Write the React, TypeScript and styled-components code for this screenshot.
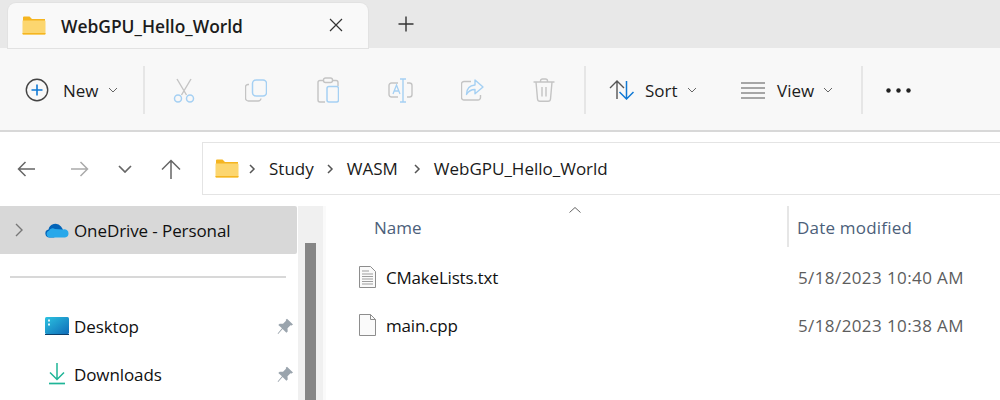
import React from 'react';
import styled, { createGlobalStyle } from 'styled-components';

const Global = createGlobalStyle`
  html, body { margin: 0; padding: 0; background: #fff; overflow: hidden; }
  * { box-sizing: border-box; }
  #root { width: 1000px; height: 400px; overflow: hidden; font-family: "Open Sans", "Noto Sans", sans-serif; color: #1a1a1a; }
`;

const TabStrip = styled.div`
  height: 48px; background: #e8e8e8; padding: 3px 0 0 8px; display: flex; align-items: stretch;
`;
const Tab = styled.div`
  width: 360px; background: #f9f9f9; border-radius: 8px 8px 0 0; display: flex; align-items: center; padding: 0 25px 0 14px;
  box-shadow: 0 0 0 1px #e2e2e2;
`;
const TabTitle = styled.span`
  margin-left: 15px; font-size: 17.4px; font-weight: 600; flex: 1; color: #1c1c1c;
`;
const CloseIcon = styled.svg`
  margin-bottom: 2px;
`;
const NewTab = styled.div`
  margin-left: 30px; display: flex; align-items: center; padding-bottom: 4px;
`;
const Toolbar = styled.div`
  height: 84px; background: #f8f8f8; border-bottom: 2px solid #d8d8d8; display: flex; align-items: center; padding: 2px 0 0 25px;
`;
const ToolButton = styled.div<{ $w: number; $pl?: number }>`
  width: ${p => p.$w}px; padding-left: ${p => p.$pl ?? 0}px; display: flex; align-items: center; font-size: 17px; letter-spacing: 0; color: #1c1c1c; flex: none;
`;
const ToolLabel = styled.span<{ $gap: number }>`
  margin-left: ${p => p.$gap}px;
`;
const Chevron = styled.span`
  margin-left: 9px; display: flex;
`;
const ToolDivider = styled.div`
  width: 2px; height: 48px; background: #e6e6e6; flex: none;
`;
const IconSlot = styled.div<{ $w: number }>`
  width: ${p => p.$w}px; display: flex; justify-content: center; flex: none;
`;
const Spacer = styled.div`
  width: 7px; flex: none;
`;
const AddressRow = styled.div`
  height: 74px; display: flex; align-items: flex-start; padding-top: 10px; background: #fff;
`;
const NavIcons = styled.div`
  width: 202px; height: 53px; flex: none; display: grid; grid-template-columns: 53px 53px 37px 55px; align-items: center; justify-items: center;
`;
const AddressBox = styled.div`
  flex: 1; height: 53px; border: 1px solid #e4e4e4; border-right: none; display: flex; align-items: center; padding-left: 12px; font-size: 17px; color: #1a1a1a; margin-right: -2px;
`;
const Crumb = styled.span`
  margin-left: 13px;
`;
const Sep = styled.span`
  margin-left: 12px; display: flex;
  &:nth-child(2) { margin-left: 9px; }
  &:nth-child(6) { margin-left: 15px; }
`;
const Body = styled.div`
  height: 194px; display: flex; background: #fff;
`;
const Sidebar = styled.div`
  width: 298px; flex: none;
`;
const SelectedRow = styled.div`
  height: 48px; background: #d8d8d8; display: flex; align-items: center; padding-left: 15px; margin-right: 1px; border-radius: 0 2px 2px 0; font-size: 17px; letter-spacing: -0.1px; color: #101010;
`;
const Expander = styled.svg`
  margin-right: 21px;
`;
const CloudIcon = styled.svg`
  margin-right: 5px;
`;
const SideDivider = styled.div`
  height: 2px; background: #d8d8d8; margin: 22px 12px 24px 10px;
`;
const SideRow = styled.div`
  height: 48px; display: flex; align-items: center; padding-left: 45px; font-size: 17px; letter-spacing: -0.1px; color: #101010;
`;
const SideIcon = styled.span`
  width: 24px; display: flex; justify-content: center; margin-right: 5px; flex: none;
`;
const Pin = styled.span`
  margin-left: auto; margin-right: 4px; display: flex;
`;
const ScrollTrack = styled.div`
  width: 28px; flex: none; background: linear-gradient(to right, #f0f0f0 0 25px, #fafafa 25px); padding: 37px 7px 0 7px;
`;
const ScrollThumb = styled.div`
  width: 11px; height: 157px; background: #868686;
`;
const Content = styled.div`
  flex: 1; padding-left: 33px; min-width: 0;
`;
const HeaderRow = styled.div`
  height: 41px; display: flex; position: relative; font-size: 17px; color: #4c607a;
`;
const SortCaret = styled.span`
  position: absolute; left: 210px; top: 0; display: flex;
`;
const NameHead = styled.div`
  width: 428px; padding-left: 15px; padding-top: 10px;
`;
const DateHead = styled.div`
  border-left: 2px solid #e6e6e6; padding-left: 8px; padding-top: 10px; white-space: nowrap; flex: 1; letter-spacing: 0.2px;
`;
const Rows = styled.div`
  padding-top: 6px;
`;
const FileRow = styled.div`
  height: 48px; display: flex; align-items: center; font-size: 17px; letter-spacing: -0.2px; color: #101010;
`;
const FileName = styled.div`
  width: 412px; display: flex; align-items: center; gap: 10px;
`;
const FileDate = styled.div`
  padding-left: 27px; color: #5d5d5d; white-space: nowrap; font-size: 17px; letter-spacing: 0.4px;
`;

const blue = '#a5d0f3';
const grey = '#c4c4c4';

const Folder = () => (
  <svg width="24" height="19" viewBox="0 0 24 19">
    <path d="M1 1.5A1 1 0 0 1 2 .5h5.5L10 3h13v3H1z" fill="#f5b520" />
    <path d="M.5 4.5h22.3a.7.7 0 0 1 .7.7v12.6a.7.7 0 0 1-.7.7H1.2a.7.7 0 0 1-.7-.7z" fill="#fcd66f" />
    <path d="M.5 17h23v.8a.7.7 0 0 1-.7.7H1.2a.7.7 0 0 1-.7-.7z" fill="#f5b520" />
  </svg>
);
const Down = () => (
  <svg width="10" height="6" viewBox="0 0 10 6"><path d="M1 1l4 4 4-4" fill="none" stroke="#666" strokeWidth="1" /></svg>
);
const Crumbsep = () => (
  <svg width="8" height="10" viewBox="0 0 8 10"><path d="M2 1l4 4-4 4" fill="none" stroke="#555" strokeWidth="1.5" /></svg>
);
const PinIcon = () => (
  <svg width="17" height="17" viewBox="0 0 17 17">
    <path d="M10 .8l6 5.6-1.4 1.2-1.1-.3-3 3 .2 3.2-1.3 1.2L5.6 11 1.2 16 .6 15.4 5 10.3 1.3 7l1.4-1.3 3.3.1 3-3-.2-1z" fill="#9aa4ad" />
  </svg>
);

export default function App() {
  return (
    <>
      <Global />
      <TabStrip>
        <Tab>
          <Folder />
          <TabTitle>WebGPU_Hello_World</TabTitle>
          <CloseIcon width="14" height="14" viewBox="0 0 14 14"><path d="M1 1l12 12M13 1L1 13" stroke="#333" strokeWidth="1.2" /></CloseIcon>
        </Tab>
        <NewTab>
          <svg width="16" height="16" viewBox="0 0 16 16"><path d="M8 .5v15M.5 8h15" stroke="#333" strokeWidth="1.4" /></svg>
        </NewTab>
      </TabStrip>
      <Toolbar>
        <ToolButton $w={118}>
          <svg width="24" height="24" viewBox="0 0 24 24">
            <circle cx="12" cy="12" r="10.7" fill="none" stroke="#444" strokeWidth="1.4" />
            <path d="M12 6.5v11M6.5 12h11" stroke="#0f78d4" strokeWidth="1.6" />
          </svg>
          <ToolLabel $gap={14}>New</ToolLabel>
          <Chevron><Down /></Chevron>
        </ToolButton>
        <ToolDivider />
        <IconSlot $w={78}>
          <svg width="22" height="25" viewBox="0 0 22 25">
            <path d="M4 1l9.5 16M18 1L8.500 17" fill="none" stroke={grey} strokeWidth="1.4" />
            <circle cx="5" cy="20.500" r="3.500" fill="none" stroke={blue} strokeWidth="1.5" />
            <circle cx="17" cy="20.500" r="3.500" fill="none" stroke={blue} strokeWidth="1.5" />
          </svg>
        </IconSlot>
        <IconSlot $w={66}>
          <svg width="22" height="23" viewBox="0 0 22 23">
            <path d="M4 5.500H3a2.500 2.500 0 0 0-2.500 2.500v11A3 3 0 0 0 3.500 22H13a3 3 0 0 0 3-2.500" fill="none" stroke={grey} strokeWidth="1.4" />
            <rect x="7.500" y="1" width="14" height="16" rx="3.500" fill="none" stroke={blue} strokeWidth="1.5" />
          </svg>
        </IconSlot>
        <IconSlot $w={78}>
          <svg width="22" height="26" viewBox="0 0 22 26">
            <path d="M6 3.500H3A2 2 0 0 0 1 5.500V23a2 2 0 0 0 2 2h5M16 3.500h3A2 2 0 0 1 21 5.500V9" fill="none" stroke={grey} strokeWidth="1.4" />
            <rect x="6.500" y="1" width="9" height="4.500" rx="2" fill="none" stroke={grey} strokeWidth="1.4" />
            <rect x="10" y="9.500" width="11.500" height="15.500" rx="2" fill="none" stroke={blue} strokeWidth="1.5" />
          </svg>
        </IconSlot>
        <IconSlot $w={66}>
          <svg width="25" height="25" viewBox="0 0 25 25">
            <path d="M10 5H3.500A2.500 2.500 0 0 0 1 7.500v9A2.500 2.500 0 0 0 3.500 19H10M19 5h2.500A2.500 2.500 0 0 1 24 7.500v9a2.500 2.500 0 0 1-2.500 2.500H19" fill="none" stroke={grey} strokeWidth="1.4" />
            <path d="M12 1h6M12 24h6M15 1v23" fill="none" stroke={blue} strokeWidth="1.4" />
            <path d="M5 16l3.500-9 3.500 9M6.200 13h4.600" fill="none" stroke={blue} strokeWidth="1.3" />
          </svg>
        </IconSlot>
        <IconSlot $w={78}>
          <svg width="23" height="22" viewBox="0 0 23 22">
            <path d="M10 2.500H3a2.500 2.500 0 0 0-2.500 2.500v13.500A2.500 2.500 0 0 0 3 21h14a2.500 2.500 0 0 0 2.500-2.500V16" fill="none" stroke={grey} strokeWidth="1.4" />
            <path d="M14 1l8 7-8 6.800V10.500c-4 0-6.500 1.500-8.500 5 0-5.500 3-9 8.500-9.500z" fill="none" stroke={blue} strokeWidth="1.4" strokeLinejoin="round" />
          </svg>
        </IconSlot>
        <IconSlot $w={66}>
          <svg width="22" height="24" viewBox="0 0 22 24">
            <path d="M.500 4h21M7.500 4V3a2 2 0 0 1 2-2h3a2 2 0 0 1 2 2v1M3 4l1.500 17a2.500 2.500 0 0 0 2.500 2.300h8a2.500 2.500 0 0 0 2.500-2.300L19 4M9 9v9.500M13 9v9.500" fill="none" stroke={grey} strokeWidth="1.4" />
          </svg>
        </IconSlot>
        <Spacer />
        <ToolDivider />
        <ToolButton $w={132} $pl={23}>
          <svg width="25" height="20" viewBox="0 0 25 20">
            <path d="M8 19V1.500M1 8l7-7 7 7" fill="none" stroke="#555" strokeWidth="1.4" />
            <path d="M17.500 1v17.500M10.500 12l7 7 7-7" fill="none" stroke="#0f78d4" strokeWidth="1.5" />
          </svg>
          <ToolLabel $gap={11}>Sort</ToolLabel>
          <Chevron><Down /></Chevron>
        </ToolButton>
        <ToolButton $w={143} $pl={23}>
          <svg width="24" height="17" viewBox="0 0 24 17">
            <path d="M0 1h24M0 6h24M0 11h24M0 16h24" stroke="#555" strokeWidth="1.2" />
          </svg>
          <ToolLabel $gap={12}>View</ToolLabel>
          <Chevron><Down /></Chevron>
        </ToolButton>
        <ToolDivider />
        <IconSlot $w={70}>
          <svg width="25" height="5" viewBox="0 0 25 5" fill="#222">
            <circle cx="2.500" cy="2.500" r="2.200" /><circle cx="12.500" cy="2.500" r="2.200" /><circle cx="22.500" cy="2.500" r="2.200" />
          </svg>
        </IconSlot>
      </Toolbar>
      <AddressRow>
        <NavIcons>
          <svg width="19" height="16" viewBox="0 0 19 16"><path d="M18 8H1.500M8.500 1l-7 7 7 7" fill="none" stroke="#666" strokeWidth="1.5" /></svg>
          <svg width="19" height="16" viewBox="0 0 19 16"><path d="M1 8h16.500M10.500 1l7 7-7 7" fill="none" stroke="#aaa" strokeWidth="1.5" /></svg>
          <svg width="14" height="8" viewBox="0 0 14 8"><path d="M1 1l6 6 6-6" fill="none" stroke="#666" strokeWidth="1.7" /></svg>
          <svg width="20" height="20" viewBox="0 0 20 20"><path d="M10 20V1.500M1 10.500l9-9 9 9" fill="none" stroke="#666" strokeWidth="1.5" /></svg>
        </NavIcons>
        <AddressBox>
          <Folder />
          <Sep><Crumbsep /></Sep>
          <Crumb>Study</Crumb>
          <Sep><Crumbsep /></Sep>
          <Crumb>WASM</Crumb>
          <Sep><Crumbsep /></Sep>
          <Crumb>WebGPU_Hello_World</Crumb>
        </AddressBox>
      </AddressRow>
      <Body>
        <Sidebar>
          <SelectedRow>
            <Expander width="9" height="14" viewBox="0 0 9 14"><path d="M1 1l6 6-6 6" fill="none" stroke="#777" strokeWidth="1.4" /></Expander>
            <CloudIcon width="24" height="16" viewBox="0 0 24 16">
              <path d="M9 15.500H4.500a4 4 0 0 1-1-7.900A7 7 0 0 1 16 4.500l2 3z" fill="#0364b8" />
              <path d="M5 15.500a3.500 3.500 0 0 1-1-6.800A4 4 0 0 1 10 7l8 .5a4 4 0 0 1 5.500 4A4 4 0 0 1 20 15.500z" fill="#28a8ea" />
            </CloudIcon>
            <span>OneDrive - Personal</span>
          </SelectedRow>
          <SideDivider />
          <SideRow>
            <SideIcon>
              <svg width="24" height="18" viewBox="0 0 24 18">
                <defs>
                  <linearGradient id="desk" x1="0" y1="0" x2="1" y2="1">
                    <stop offset="0" stopColor="#2cc2e0" /><stop offset="1" stopColor="#0f6cb8" />
                  </linearGradient>
                </defs>
                <rect x="0" y="0" width="24" height="17" rx="1.500" fill="url(#desk)" />
                <rect x="0" y="17" width="24" height="1" fill="#0b3f6b" />
                <rect x="3" y="2.500" width="2" height="2" fill="#dff5fb" />
                <rect x="3" y="6.500" width="2" height="2" fill="#dff5fb" />
              </svg>
            </SideIcon>
            <span>Desktop</span>
            <Pin><PinIcon /></Pin>
          </SideRow>
          <SideRow>
            <SideIcon>
              <svg width="16" height="22" viewBox="0 0 16 22">
                <path d="M8 0v16M1 9.500l7 7 7-7" fill="none" stroke="#1fb597" strokeWidth="1.5" />
                <path d="M0 20.500h16" stroke="#1fb597" strokeWidth="1.700" />
              </svg>
            </SideIcon>
            <span>Downloads</span>
            <Pin><PinIcon /></Pin>
          </SideRow>
        </Sidebar>
        <ScrollTrack><ScrollThumb /></ScrollTrack>
        <Content>
          <HeaderRow>
            <SortCaret>
              <svg width="12" height="8" viewBox="0 0 12 8"><path d="M.5 6.500L6 1.500l5.500 5" fill="none" stroke="#666" strokeWidth="1" /></svg>
            </SortCaret>
            <NameHead>Name</NameHead>
            <DateHead>Date modified</DateHead>
          </HeaderRow>
          <Rows>
            <FileRow>
              <FileName>
                <svg width="17" height="22" viewBox="0 0 17 22">
                  <path d="M.5.500h11l5 5v16H.5z" fill="#fafafa" stroke="#8d8d8d" />
                  <path d="M3 5h7M3 8h11M3 10.500h11M3 13h11M3 15.500h11M3 18h11" stroke="#9d9d9d" />
                </svg>
                <span>CMakeLists.txt</span>
              </FileName>
              <FileDate>5/18/2023 10:40 AM</FileDate>
            </FileRow>
            <FileRow>
              <FileName>
                <svg width="17" height="22" viewBox="0 0 17 22">
                  <path d="M.5.500h11l5 5v16H.5z" fill="#fafafa" stroke="#8d8d8d" />
                  <path d="M11.500.500v5h5" fill="none" stroke="#8d8d8d" />
                </svg>
                <span>main.cpp</span>
              </FileName>
              <FileDate>5/18/2023 10:38 AM</FileDate>
            </FileRow>
          </Rows>
        </Content>
      </Body>
    </>
  );
}
